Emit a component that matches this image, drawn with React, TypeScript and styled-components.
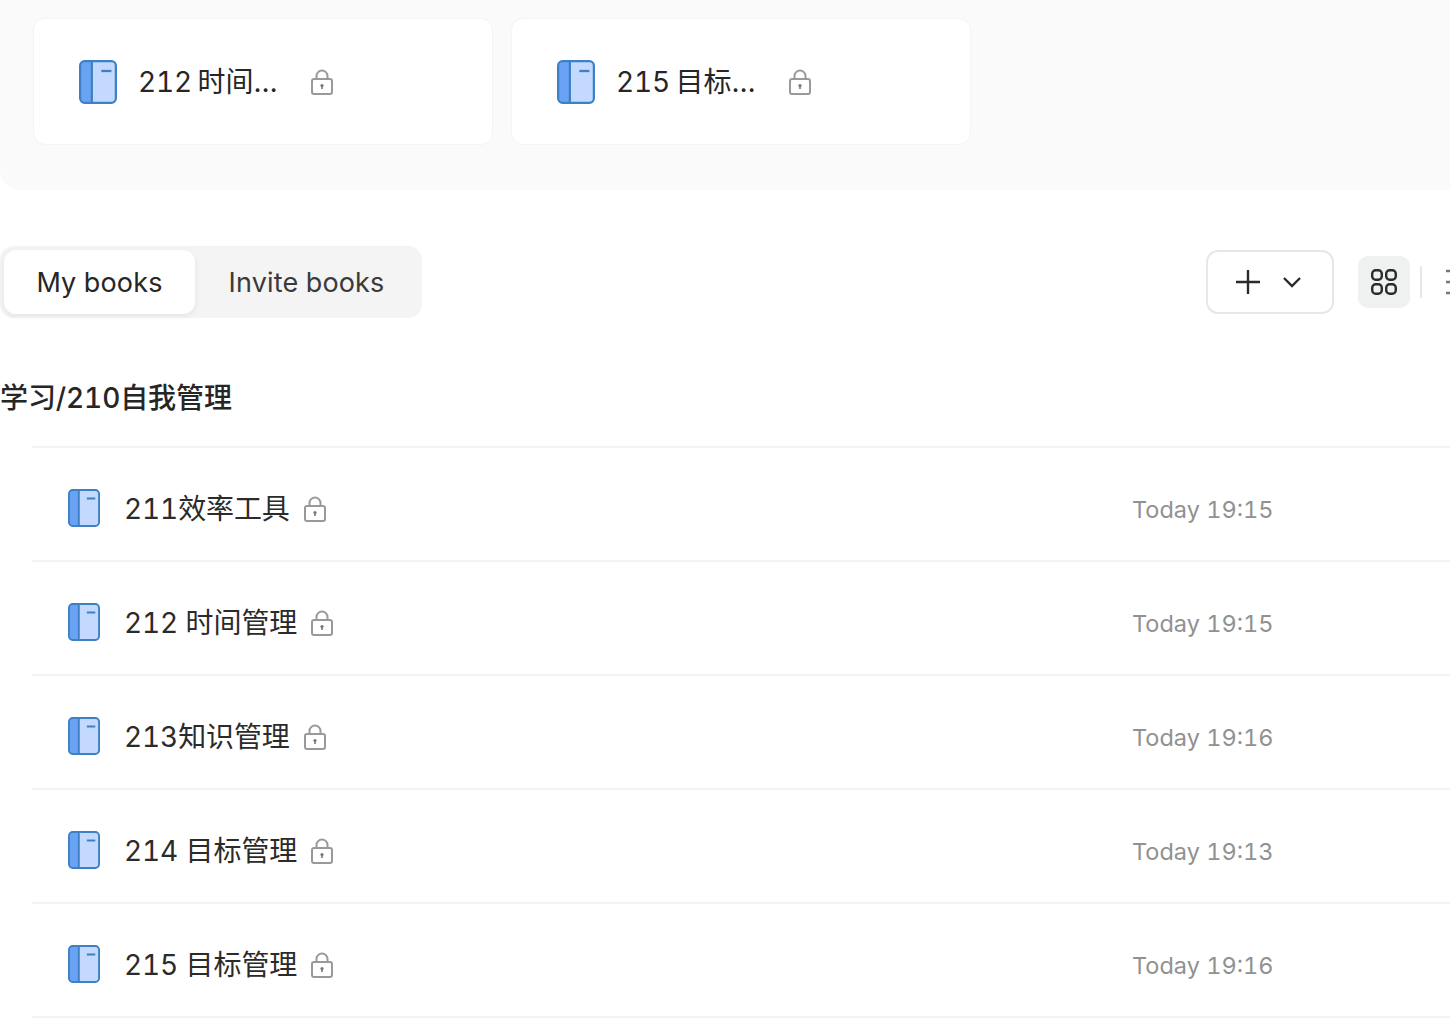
import React from "react";
import styled, { createGlobalStyle } from "styled-components";

const GlobalStyle = createGlobalStyle`
  html, body {
    margin: 0;
    padding: 0;
    height: 1020px;
    overflow: hidden;
    background: #fff;
  }
  body {
    font-family: Inter, "Noto Sans CJK SC", sans-serif;
    font-variant-numeric: tabular-nums;
    color: #262626;
  }
`;

const Page = styled.div`
  width: 1450px;
  height: 1020px;
  overflow: hidden;
`;

const RecentPanel = styled.section`
  display: flex;
  gap: 18px;
  height: 190px;
  box-sizing: border-box;
  width: 1480px;
  padding: 18px 33px 0;
  background: #fafafa;
  border-radius: 0 0 0 20px;
`;

const RecentCard = styled.div`
  display: flex;
  align-items: center;
  box-sizing: border-box;
  width: 460px;
  height: 127px;
  padding-left: 45px;
  background: #fff;
  border: 1px solid #f4f4f4;
  border-radius: 12px;
`;

const RecentName = styled.span`
  width: 144px;
  margin-left: 21px;
  margin-right: 28px;
  font-size: 28px;
  line-height: 40px;
  letter-spacing: -0.1px;
  word-spacing: -2px;
  white-space: nowrap;
  overflow: hidden;
  text-overflow: ellipsis;
`;

const Toolbar = styled.div`
  display: flex;
  align-items: center;
  justify-content: space-between;
  height: 72px;
  margin-top: 56px;
`;

const Tabs = styled.div`
  display: flex;
  box-sizing: border-box;
  width: 422px;
  height: 72px;
  padding: 4px;
  background: #f4f4f4;
  border-radius: 14px;
`;

const Tab = styled.div<{ $active?: boolean }>`
  display: flex;
  align-items: center;
  justify-content: center;
  box-sizing: border-box;
  width: ${(p) => (p.$active ? "191px" : "223px")};
  height: 64px;
  font-size: 27px;
  letter-spacing: 0.15px;
  color: ${(p) => (p.$active ? "#262626" : "#3a3a3a")};
  background: ${(p) => (p.$active ? "#fff" : "transparent")};
  border-radius: 12px;
  box-shadow: ${(p) => (p.$active ? "0 2px 6px rgba(0, 0, 0, 0.07)" : "none")};
`;

const Actions = styled.div`
  display: flex;
  align-items: center;
  width: 272px;
  margin-right: -28px;
`;

const AddButton = styled.div`
  display: flex;
  align-items: center;
  justify-content: center;
  gap: 21px;
  box-sizing: border-box;
  width: 128px;
  height: 64px;
  padding-right: 3px;
  margin-right: 24px;
  background: #fff;
  border: 2px solid #e7e7e7;
  border-radius: 12px;
`;

const ViewButton = styled.div`
  display: flex;
  align-items: center;
  justify-content: center;
  width: 52px;
  height: 52px;
  background: #eff0f0;
  border-radius: 10px;
`;

const ViewDivider = styled.div`
  width: 2px;
  height: 32px;
  margin: 0 22px 0 10px;
  background: #e7e7e7;
`;

const GroupTitle = styled.h2`
  margin: 62px 0 30px;
  font-size: 28px;
  line-height: 36px;
  font-weight: 500;
  letter-spacing: -0.1px;
  color: #262626;
`;

const BookList = styled.div`
  margin-left: 32px;
  border-top: 2px solid #f4f4f4;
`;

const BookRow = styled.div`
  display: flex;
  align-items: center;
  box-sizing: border-box;
  height: 114px;
  padding: 8px 0 0 36px;
  border-bottom: 2px solid #f4f4f4;
`;

const BookMain = styled.div`
  display: flex;
  align-items: center;
  flex: none;
  width: 1064px;
`;

const BookName = styled.span`
  margin-left: 24px;
  margin-right: 13px;
  padding-top: 1px;
  font-size: 28px;
  line-height: 40px;
  letter-spacing: -0.1px;
  color: #2b2b2b;
`;

const LockSlot = styled.span`
  display: flex;
  flex: none;
  padding-top: 2px;
`;

const UpdatedAt = styled.span`
  font-size: 23.5px;
  color: #8f9291;
  padding-top: 2px;
`;

const BookIcon: React.FC<{ width?: number; height?: number }> = ({ width = 32, height = 38 }) => (
  <svg width={width} height={height} viewBox="0 0 34 38" preserveAspectRatio="none" fill="none" style={{ flex: "none" }}>
    <rect x="1" y="1" width="32" height="36" rx="4" fill="#c3dafe" />
    <path d="M11 1H5a4 4 0 0 0-4 4v28a4 4 0 0 0 4 4h6z" fill="#6aa3f3" />
    <rect x="1" y="1" width="32" height="36" rx="4" stroke="#3d80c6" strokeWidth="2" />
    <path d="M11.5 1v36" stroke="#3d80c6" strokeWidth="2" />
    <path d="M20 9.5h9" stroke="#3d80c6" strokeWidth="2" />
  </svg>
);

const LockIcon: React.FC = () => (
  <svg width="24" height="26" viewBox="0 0 24 26" fill="none" stroke="#999" strokeWidth="2">
    <rect x="2" y="10" width="20" height="15" rx="2" />
    <path d="M6.5 10V7a5.5 5.5 0 0 1 11 0v3" />
    <circle cx="12" cy="16.5" r="1.6" fill="#777" stroke="none" />
    <path d="M12 17v3" stroke="#777" strokeWidth="1.6" />
  </svg>
);

const PlusIcon: React.FC = () => (
  <svg width="26" height="26" viewBox="0 0 26 26" fill="none" stroke="#2b2b2b" strokeWidth="2.4">
    <path d="M13 1v24M1 13h24" />
  </svg>
);

const ChevronIcon: React.FC = () => (
  <svg width="20" height="12" viewBox="0 0 20 12" fill="none" stroke="#2b2b2b" strokeWidth="2.4">
    <path d="M2 2l8 8 8-8" />
  </svg>
);

const GridIcon: React.FC = () => (
  <svg width="26" height="26" viewBox="0 0 26 26" fill="none" stroke="#2b2b2b" strokeWidth="2.4">
    <rect x="1.2" y="1.2" width="9.6" height="9.6" rx="3.5" />
    <rect x="15.2" y="1.2" width="9.6" height="9.6" rx="3.5" />
    <rect x="1.2" y="15.2" width="9.6" height="9.6" rx="3.5" />
    <rect x="15.2" y="15.2" width="9.6" height="9.6" rx="3.5" />
  </svg>
);

const ListIcon: React.FC = () => (
  <svg width="28" height="28" viewBox="0 0 28 28" fill="none" stroke="#777" strokeWidth="2.4" style={{ flex: "none" }}>
    <path d="M2 3h5M12 3h14M2 14h5M12 14h14M2 25h5M12 25h14" />
  </svg>
);

interface Book {
  name: string;
  updatedAt: string;
}

const recent = ["212 时间管理", "215 目标管理"];

const books: Book[] = [
  { name: "211效率工具", updatedAt: "Today 19:15" },
  { name: "212 时间管理", updatedAt: "Today 19:15" },
  { name: "213知识管理", updatedAt: "Today 19:16" },
  { name: "214 目标管理", updatedAt: "Today 19:13" },
  { name: "215 目标管理", updatedAt: "Today 19:16" },
];

const App: React.FC = () => (
  <Page>
    <GlobalStyle />
    <RecentPanel>
      {recent.map((name) => (
        <RecentCard key={name}>
          <BookIcon width={38} height={44} />
          <RecentName>{name}</RecentName>
          <LockIcon />
        </RecentCard>
      ))}
    </RecentPanel>
    <Toolbar>
      <Tabs>
        <Tab $active>My books</Tab>
        <Tab>Invite books</Tab>
      </Tabs>
      <Actions>
        <AddButton>
          <PlusIcon />
          <ChevronIcon />
        </AddButton>
        <ViewButton>
          <GridIcon />
        </ViewButton>
        <ViewDivider />
        <ListIcon />
      </Actions>
    </Toolbar>
    <GroupTitle>学习/210自我管理</GroupTitle>
    <BookList>
      {books.map((book) => (
        <BookRow key={book.name}>
          <BookMain>
            <BookIcon />
            <BookName>{book.name}</BookName>
            <LockSlot>
              <LockIcon />
            </LockSlot>
          </BookMain>
          <UpdatedAt>{book.updatedAt}</UpdatedAt>
        </BookRow>
      ))}
    </BookList>
  </Page>
);

export default App;
